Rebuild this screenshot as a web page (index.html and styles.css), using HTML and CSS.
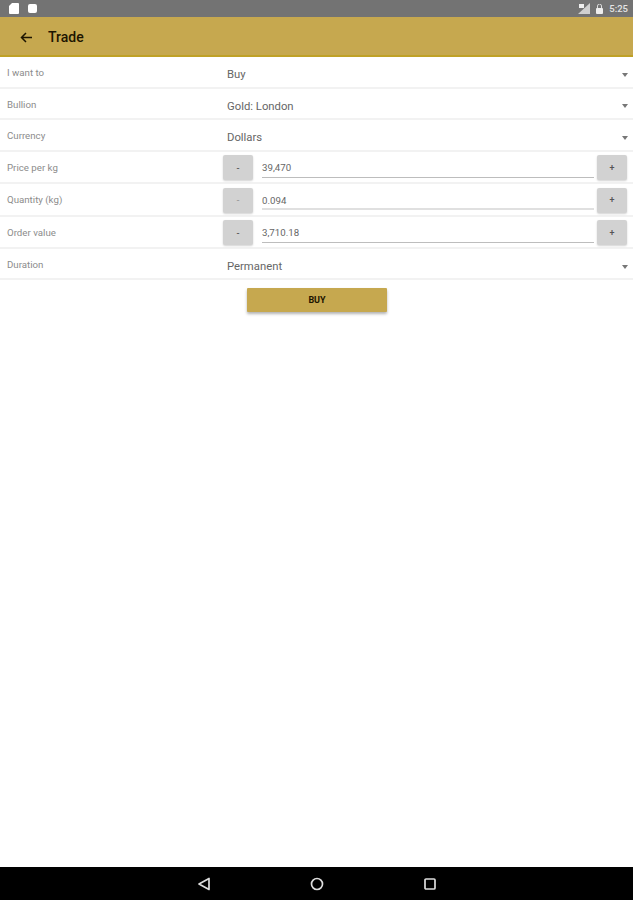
FILE: index.html
```html
<!DOCTYPE html>
<html lang="en">
<head>
<meta charset="utf-8">
<title>Trade</title>
<link rel="stylesheet" href="styles.css">
</head>
<body>
<div class="screen">
  <div class="status">
    <div class="status-left">
      <svg class="ic" width="10" height="11" viewBox="0 0 10 11"><path d="M3 0h6a1 1 0 0 1 1 1v9a1 1 0 0 1-1 1H1a1 1 0 0 1-1-1V3z" fill="#fff"/></svg>
      <svg class="ic" width="9" height="9" viewBox="0 0 9 9"><rect width="9" height="9" rx="2" fill="#fff"/></svg>
    </div>
    <div class="status-right">
      <svg width="12" height="11" viewBox="0 0 12 11"><path d="M12 0v11H0z" fill="#cfcfcf"/><path d="M1 1h5v4H1z" fill="#eee"/></svg>
      <svg width="7" height="10" viewBox="0 0 7 10"><path d="M1.500 4V2a2 2 0 0 1 4 0v2" fill="none" stroke="#ddd"/><rect y="4" width="7" height="6" rx="1" fill="#eee"/></svg>
      <span class="time">5:25</span>
    </div>
  </div>
  <header class="toolbar">
    <svg class="back" width="12" height="11" viewBox="0 0 12 11"><path d="M12 5.500H2M6 1 1.500 5.500 6 10" fill="none" stroke="#1d1500" stroke-width="1.500"/></svg>
    <span class="title">Trade</span>
  </header>
  <main class="form">
    <div class="row"><span class="label">I want to</span><div class="select"><span>Buy</span><i class="caret"></i></div></div>
    <div class="row"><span class="label">Bullion</span><div class="select"><span>Gold: London</span><i class="caret"></i></div></div>
    <div class="row"><span class="label">Currency</span><div class="select"><span>Dollars</span><i class="caret"></i></div></div>
    <div class="row row-step"><span class="label">Price per kg</span><div class="stepper"><button class="step">-</button><div class="field">39,470</div><button class="step">+</button></div></div>
    <div class="row row-step"><span class="label">Quantity (kg)</span><div class="stepper"><button class="step faint">-</button><div class="field faint-line">0.094</div><button class="step">+</button></div></div>
    <div class="row row-step"><span class="label">Order value</span><div class="stepper"><button class="step">-</button><div class="field">3,710.18</div><button class="step">+</button></div></div>
    <div class="row row-last"><span class="label">Duration</span><div class="select"><span>Permanent</span><i class="caret"></i></div></div>
    <div class="actions"><button class="buy">BUY</button></div>
  </main>
  <nav class="navbar">
    <svg width="14" height="14" viewBox="0 0 14 14"><path d="M12 1.500v11L2 7z" fill="none" stroke="#ddd" stroke-width="1.700" stroke-linejoin="round"/></svg>
    <svg width="14" height="14" viewBox="0 0 14 14"><circle cx="7" cy="7" r="5.500" fill="none" stroke="#ddd" stroke-width="1.700"/></svg>
    <svg width="14" height="14" viewBox="0 0 14 14"><rect x="2" y="2" width="10" height="10" rx="1" fill="none" stroke="#ddd" stroke-width="1.700"/></svg>
  </nav>
</div>
</body>
</html>
```
FILE: styles.css
```css
* { box-sizing: border-box; }
html, body { margin: 0; height: 100%; }
body { font-family: Roboto, "Liberation Sans", sans-serif; background: #fff; overflow: hidden; }
.screen { width: 633px; height: 900px; display: flex; flex-direction: column; }

.status { height: 17px; background: #737373; display: flex; justify-content: space-between; align-items: center; padding: 0 5px 0 9px; }
.status-left { display: flex; gap: 9px; align-items: center; }
.status-right { display: flex; gap: 6px; align-items: center; }
.time { font-size: 9.500px; font-weight: 500; color: #e4e4e4; }

.toolbar { height: 40px; background: #c6a84f; border-bottom: 2px solid #bfa126; display: flex; align-items: center; padding: 2px 0 0 20px; gap: 16px; }
.back { flex: none; }
.title { font-size: 14px; font-weight: 500; color: #1d1500; }

.form { flex: 1; display: flex; flex-direction: column; }
.row { height: 31.500px; border-bottom: 2px solid #f2f2f2; display: flex; padding-left: 7px; flex: none; }
.row-step { height: 32.500px; }
.row-last { height: 30.500px; }
.label { width: 216px; flex: none; font-size: 9.700px; color: #8c8c8c; padding-top: 10px; }
.select { flex: 1; display: flex; justify-content: space-between; align-items: flex-start; font-size: 11.300px; line-height: 13px; color: #666; padding: 11px 5px 0 4px; }
.caret { width: 0; height: 0; margin-top: 4.500px; border-left: 3px solid transparent; border-right: 3px solid transparent; border-top: 4px solid #777; }

.stepper { flex: 1; display: flex; align-items: flex-start; padding: 3.500px 6px 0 0; }
.step { width: 30px; height: 25px; flex: none; border: 0; padding: 0; border-radius: 2px; background: #d2d2d2; color: #555; font: 500 9px Roboto, sans-serif; box-shadow: 0 1px 2px rgba(0,0,0,.18); }
.step.faint { color: #999; }
.field { flex: 1; margin: 0 3px 0 9px; height: 22.500px; border-bottom: 1.500px solid #bdbdbd; font-size: 9.700px; color: #666; padding-top: 7px; }
.field.faint-line { border-bottom: 2px solid #e0e0e0; }

.actions { display: flex; justify-content: center; padding: 8.500px 0 0 1px; }
.buy { width: 140px; height: 24px; border: 0; border-radius: 1px; background: #c6a84f; color: #1d1500; font: 700 9px Roboto, sans-serif; box-shadow: 0 2px 3px rgba(0,0,0,.3); }

.navbar { height: 33px; background: #000; display: flex; justify-content: center; align-items: center; gap: 99px; }
```
